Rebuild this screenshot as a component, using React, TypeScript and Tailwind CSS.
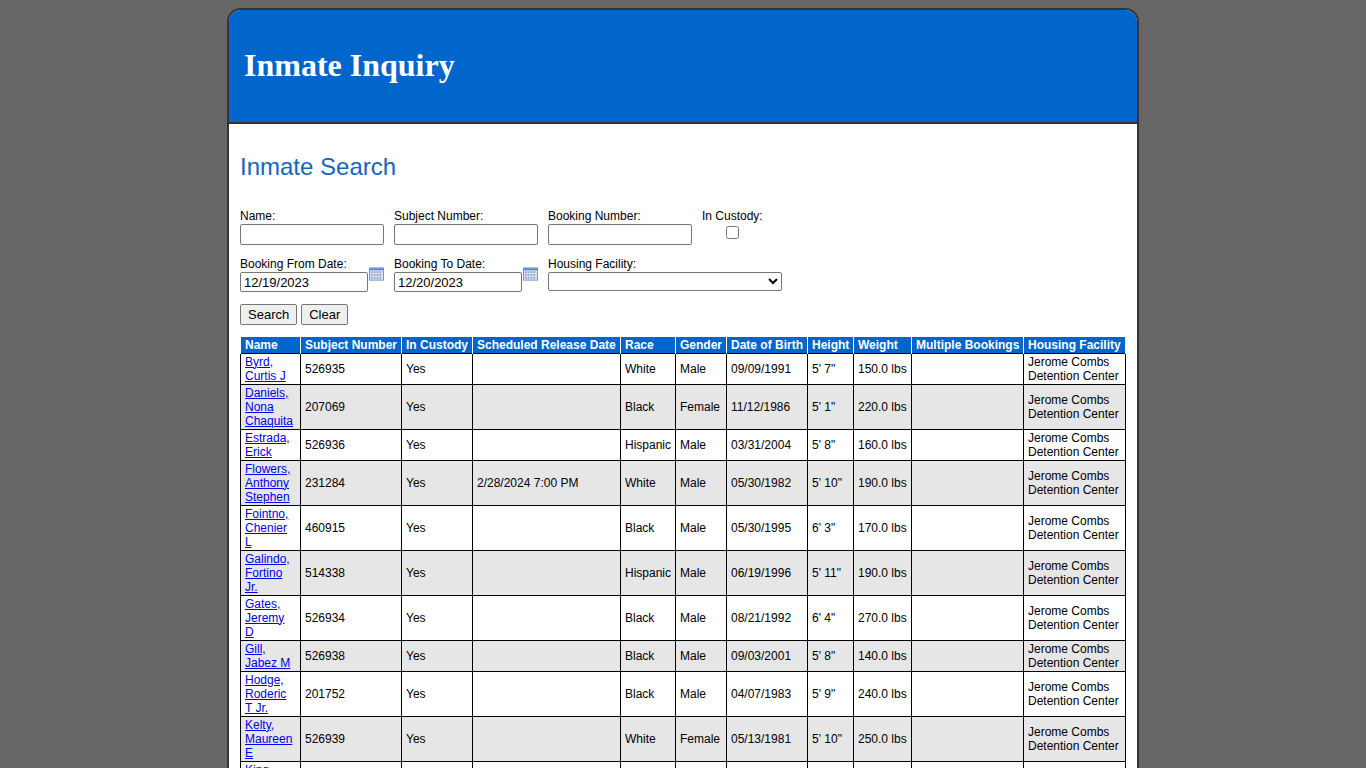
import React from "react";

const rows = [
  ["Byrd,\nCurtis J", "526935", "Yes", "", "White", "Male", "09/09/1991", "5' 7\"", "150.0 lbs"],
  ["Daniels,\nNona\nChaquita", "207069", "Yes", "", "Black", "Female", "11/12/1986", "5' 1\"", "220.0 lbs"],
  ["Estrada,\nErick", "526936", "Yes", "", "Hispanic", "Male", "03/31/2004", "5' 8\"", "160.0 lbs"],
  ["Flowers,\nAnthony\nStephen", "231284", "Yes", "2/28/2024 7:00 PM", "White", "Male", "05/30/1982", "5' 10\"", "190.0 lbs"],
  ["Fointno,\nChenier\nL", "460915", "Yes", "", "Black", "Male", "05/30/1995", "6' 3\"", "170.0 lbs"],
  ["Galindo,\nFortino\nJr.", "514338", "Yes", "", "Hispanic", "Male", "06/19/1996", "5' 11\"", "190.0 lbs"],
  ["Gates,\nJeremy\nD", "526934", "Yes", "", "Black", "Male", "08/21/1992", "6' 4\"", "270.0 lbs"],
  ["Gill,\nJabez M", "526938", "Yes", "", "Black", "Male", "09/03/2001", "5' 8\"", "140.0 lbs"],
  ["Hodge,\nRoderic\nT Jr.", "201752", "Yes", "", "Black", "Male", "04/07/1983", "5' 9\"", "240.0 lbs"],
  ["Kelty,\nMaureen\nE", "526939", "Yes", "", "White", "Female", "05/13/1981", "5' 10\"", "250.0 lbs"],
  ["King,\nJohn\nA", "526940", "Yes", "", "White", "Male", "01/01/1990", "6' 0\"", "200.0 lbs"],
];

const heads = [
  ["Name", "w-[60px]"], ["Subject Number", "w-[101px]"], ["In Custody", "w-[71px]"],
  ["Scheduled Release Date", "w-[148px]"], ["Race", "w-[55px]"], ["Gender", "w-[51px]"],
  ["Date of Birth", "w-[81px]"], ["Height", "w-[46px]"], ["Weight", "w-[58px]"],
  ["Multiple Bookings", "w-[112px]"], ["Housing Facility", "w-[102px]"],
];

function Cal() {
  return (
    <svg width="16" height="14" viewBox="0 0 16 14" className="ml-[1px] -mt-[4px]">
      <rect x="0.5" y="0.5" width="15" height="13" fill="#dbe6f7" stroke="#6b8fd0" />
      <rect x="1" y="1" width="14" height="2" fill="#5a7fd0" />
      {[4, 7, 10].map((y) => [2, 5, 8, 11].map((x) => (
        <rect key={x + "-" + y} x={x} y={y} width="2" height="2" fill={x === 8 && y === 7 ? "#e0a040" : "#8fa8dc"} />
      )))}
    </svg>
  );
}

export default function App() {
  const f = { fontFamily: '"Liberation Sans", Arial, sans-serif' };
  return (
    <div className="min-h-[768px] bg-[#666666] pt-[8px]" style={f}>
      <div className="mx-auto w-[912px] overflow-hidden rounded-t-[14px] border-2 border-[#333] bg-white">
        <div className="flex h-[114px] items-center border-b-2 border-[#333] bg-[#0066cc] pl-[15px]">
          <h1 className="-mt-[2px] text-[32px] font-bold text-white" style={{ fontFamily: '"Liberation Serif", serif' }}>Inmate Inquiry</h1>
        </div>
        <div className="px-[11px] pb-4 text-[12px] text-black">
          <h2 className="mt-[25px] text-[24px] text-[#1565c0]">Inmate Search</h2>
          <div className="mt-[24px] flex gap-[10px]">
            {["Name:", "Subject Number:", "Booking Number:"].map((l) => (
              <div key={l} className="flex w-[144px] flex-col">
                <span className="leading-[14px]">{l}</span>
                <input className="mt-[1px] h-[21px] w-[144px] rounded-[2px] border border-[#767676]" />
              </div>
            ))}
            <div className="flex flex-col items-center">
              <span className="leading-[14px]">In Custody:</span>
              <input type="checkbox" className="mt-[3px] h-[13px] w-[13px]" />
            </div>
          </div>
          <div className="mt-[12px] flex gap-[10px]">
            {[["Booking From Date:", "12/19/2023"], ["Booking To Date:", "12/20/2023"]].map(([l, v]) => (
              <div key={l} className="flex w-[144px] flex-col">
                <span className="leading-[14px]">{l}</span>
                <div className="flex items-start">
                  <input defaultValue={v} className="mt-[1px] h-[20px] w-[128px] rounded-[2px] border border-[#767676] px-[3px] text-[13px]" />
                  <Cal />
                </div>
              </div>
            ))}
            <div className="flex flex-col">
              <span className="leading-[14px]">Housing Facility:</span>
              <select className="mt-[1px] h-[19px] w-[234px] rounded-[2px] border border-[#767676] bg-white" />
            </div>
          </div>
          <div className="mt-[12px] flex gap-[4px]">
            <button className="h-[21px] rounded-[2px] border border-[#767676] bg-[#efefef] px-[7px] text-[13px]">Search</button>
            <button className="h-[21px] rounded-[2px] border border-[#767676] bg-[#efefef] px-[7px] text-[13px]">Clear</button>
          </div>
          <table className="mt-[12px] w-[886px] table-fixed border-collapse text-[12px]">
            <thead>
              <tr className="h-[16px] bg-[#0066cc] text-white">
                {heads.map(([h, w]) => (
                  <th key={h} className={`${w} border-x border-white px-[4px] text-left font-bold leading-[14px] whitespace-nowrap`}>{h}</th>
                ))}
              </tr>
            </thead>
            <tbody>
              {rows.map((r, i) => (
                <tr key={i} className={i % 2 ? "bg-[#e6e6e6]" : "bg-white"}>
                  <td className="border border-black px-[4px] py-[1px] leading-[14px]">
                    <a href="#" className="text-[#0000ee] underline whitespace-pre-line">{r[0]}</a>
                  </td>
                  {r.slice(1).map((c, j) => (
                    <td key={j} className="border border-black px-[4px] leading-[14px]">{c}</td>
                  ))}
                  <td className="border border-black px-[4px]"></td>
                  <td className="border border-black px-[4px] leading-[14px]">Jerome Combs Detention Center</td>
                </tr>
              ))}
            </tbody>
          </table>
        </div>
      </div>
    </div>
  );
}
